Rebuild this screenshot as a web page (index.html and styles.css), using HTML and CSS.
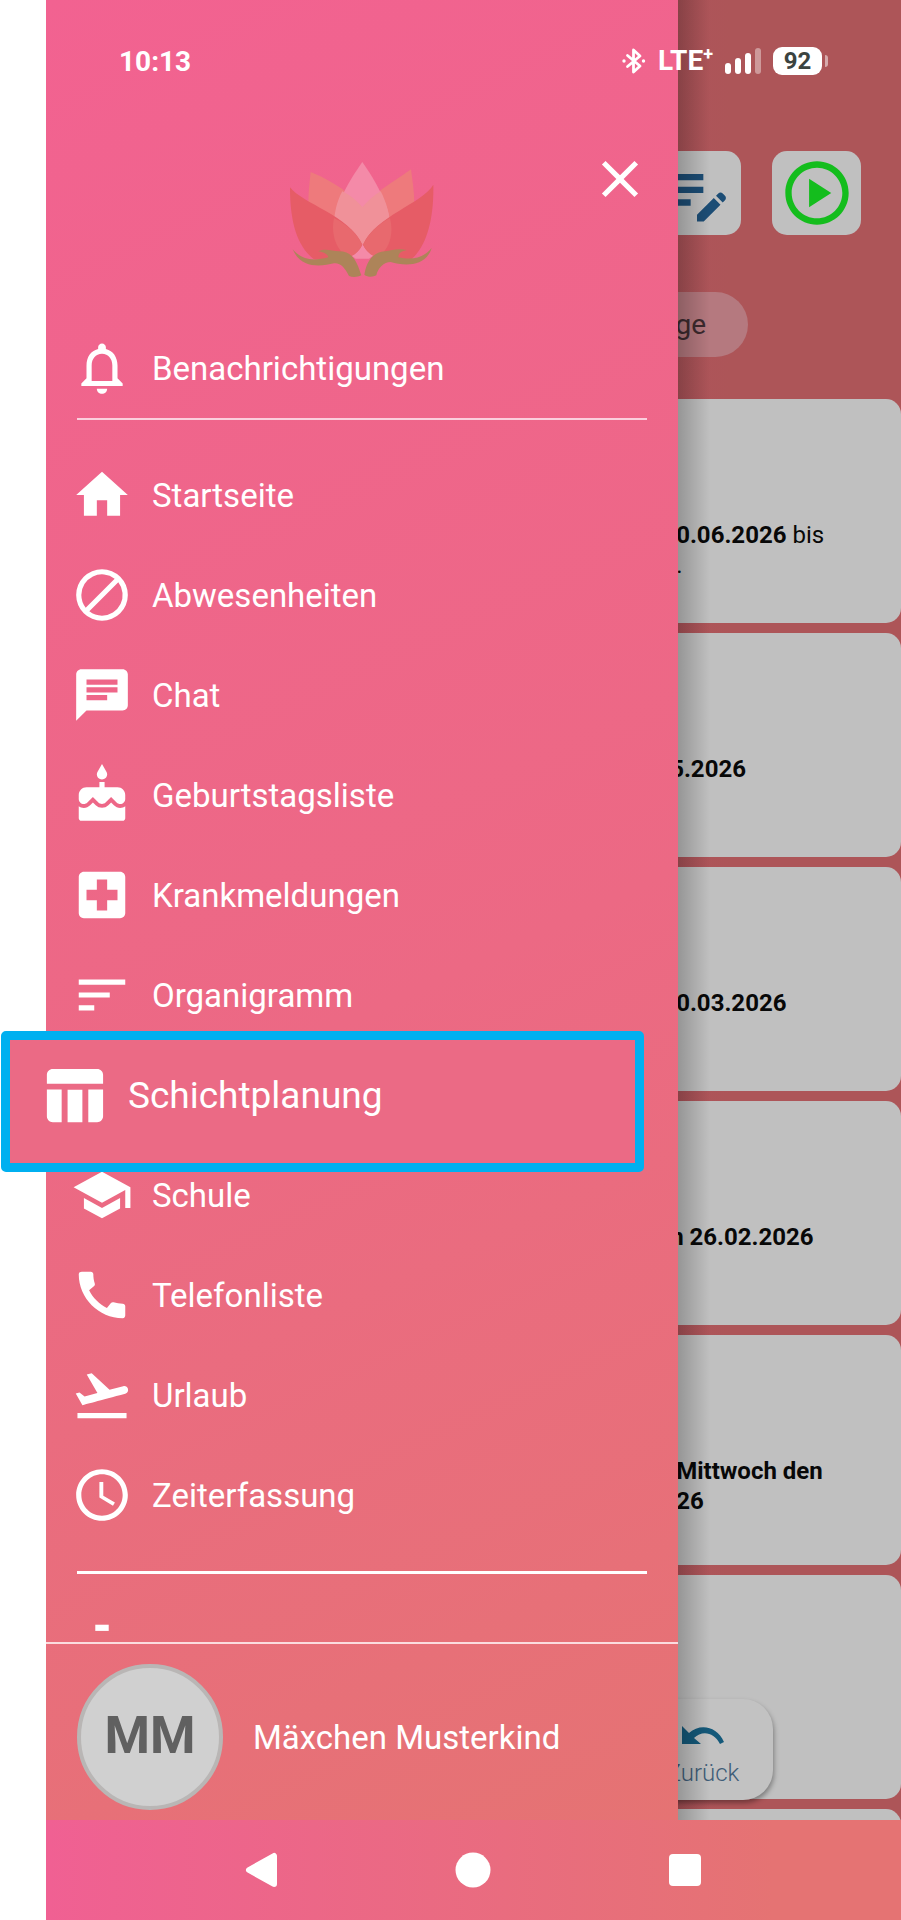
FILE: index.html
```html
<!DOCTYPE html>
<html lang="de">
<head>
    <meta charset="utf-8">
    <meta name="viewport" content="width=device-width, initial-scale=1">
    <title>Menü</title>
    <link rel="stylesheet" href="styles.css">
</head>
<body>
    <div class="phone">
        <div class="screen">

            <!-- Page behind the menu -->
            <main class="page">
                <div class="toolbar">
                    <button class="tool edit" aria-label="Bearbeiten">
                        <svg viewBox="0 0 24 24"><path d="M3 10h11v2H3v-2zm0-2h11V6H3v2zm0 8h7v-2H3v2zm15.01-3.13.71-.71c.39-.39 1.02-.39 1.41 0l.71.71c.39.39.39 1.02 0 1.41l-.71.71-2.12-2.12zm-.71.71-5.3 5.3V21h2.12l5.3-5.3-2.12-2.12z"/></svg>
                    </button>
                    <button class="tool play" aria-label="Starten">
                        <svg viewBox="0 0 24 24"><path d="M9.5 16.5l7-4.5-7-4.5v9zM12 2C6.48 2 2 6.48 2 12s4.48 10 10 10 10-4.48 10-10S17.52 2 12 2zm0 18c-4.41 0-8-3.59-8-8s3.59-8 8-8 8 3.59 8 8-3.59 8-8 8z"/></svg>
                    </button>
                </div>
                <div class="filters">
                    <button class="chip">ge</button>
                </div>
                <div class="cards">
                    <article class="card"><p class="date"><b>0.06.2026</b> bis<br>.</p></article>
                    <article class="card"><p><b>5.2026</b></p></article>
                    <article class="card"><p class="date"><b>0.03.2026</b></p></article>
                    <article class="card"><p><b>n 26.02.2026</b></p></article>
                    <article class="card tall"><p class="date"><b>Mittwoch den<br>26</b></p></article>
                    <article class="card"></article>
                    <article class="card"></article>
                </div>
                <button class="back">
                    <svg viewBox="0 0 44 20"><path d="M1 1v18h19l-7-6c8-8 20-6 26 6l4-2C36 1 19-2 8 8z"/></svg>
                    Zurück
                </button>
            </main>

            <!-- Side menu -->
            <aside class="drawer">
                <header class="drawer-head">
                    <svg class="logo" viewBox="0 0 435 345">
                        <path fill="#ee7a7c" d="M65 30C110 48 150 72 185 100L220 230L140 210L58 125C58 90 62 60 65 30z"/>
                        <path fill="#ee7a7c" d="M366 22C330 48 290 72 255 100L220 230L300 210L376 125C376 90 370 55 366 22z"/>
                        <path fill="#f48aa8" d="M220 0C185 50 135 130 135 190C135 240 180 278 200 290H240C270 270 303 230 303 190C303 130 255 50 220 0z"/>
                        <path fill="#f09199" d="M160 88C185 100 205 118 220 135C235 118 255 100 275 88C292 120 303 160 303 190C303 240 250 262 220 245C190 262 135 240 135 190C135 160 142 120 160 88z"/>
                        <path fill="#e65c66" d="M3 76C40 125 180 160 220 248C205 276 180 302 75 292C20 250 3 170 3 76z"/>
                        <path fill="#e65c66" d="M433 68C400 125 262 160 222 248C237 276 262 302 367 292C416 250 435 165 433 68z"/>
                        <path fill="#e8696e" d="M135 168C175 188 205 215 220 248C210 268 195 282 175 286C140 260 125 215 135 168z"/>
                        <path fill="#e8696e" d="M303 168C265 188 237 215 222 248C232 268 247 282 267 286C302 260 315 215 303 168z"/>
                        <path fill="#ad8459" d="M11 262C35 290 65 300 118 286C115 274 105 272 88 268C110 258 130 268 150 268C195 268 205 305 217 340C205 346 190 346 180 342C168 318 155 302 135 304C95 314 35 320 11 262z"/>
                        <path fill="#ad8459" d="M428 258C405 285 375 296 328 286C328 274 335 268 354 264C325 258 310 264 288 268C245 272 232 305 226 338C236 346 252 346 262 340C266 318 285 300 305 300C345 312 410 316 428 258z"/>
                    </svg>
                    <button class="close" aria-label="Schließen">
                        <svg class="icon" viewBox="0 0 24 24"><path d="M19 6.41L17.59 5 12 10.59 6.41 5 5 6.41 10.59 12 5 17.59 6.41 19 12 13.41 17.59 19 19 17.59 13.41 12z"/></svg>
                    </button>
                </header>

                <nav class="menu">
                    <a class="item notifications" href="#">
                        <svg class="icon" viewBox="0 0 24 24"><path d="M12 22c1.1 0 2-.9 2-2h-4c0 1.1.89 2 2 2zm6-6v-5c0-3.07-1.64-5.64-4.5-6.32V4c0-.83-.67-1.5-1.5-1.5s-1.5.67-1.5 1.5v.68C7.63 5.36 6 7.92 6 11v5l-2 2v1h16v-1l-2-2zm-2 1H8v-6c0-2.48 1.51-4.5 4-4.5s4 2.02 4 4.5v6z"/></svg>
                        Benachrichtigungen
                    </a>
                    <hr>
                    <ul>
                        <li><a class="item" href="#">
                            <svg class="icon" viewBox="0 0 24 24"><path d="M10 20v-6h4v6h5v-8h3L12 3 2 12h3v8z"/></svg>
                            Startseite
                        </a></li>
                        <li><a class="item" href="#">
                            <svg class="icon" viewBox="0 0 24 24"><path d="M12 2a10 10 0 1 0 0 20 10 10 0 0 0 0-20zM4 12a8 8 0 0 1 12.9-6.31L5.69 16.9A7.9 7.9 0 0 1 4 12zm8 8a7.9 7.9 0 0 1-4.9-1.69L18.31 7.1A8 8 0 0 1 12 20z"/></svg>
                            Abwesenheiten
                        </a></li>
                        <li><a class="item" href="#">
                            <svg class="icon" viewBox="0 0 24 24"><path d="M20 2H4c-1.1 0-1.99.9-1.99 2L2 22l4-4h14c1.1 0 2-.9 2-2V4c0-1.1-.9-2-2-2zM6 9h12v2H6V9zm8 5H6v-2h8v2zm4-6H6V6h12v2z"/></svg>
                            Chat
                        </a></li>
                        <li><a class="item" href="#">
                            <svg class="icon" viewBox="0 0 24 24"><path d="M12 6c1.11 0 2-.9 2-2 0-.38-.1-.73-.29-1.03L12 0l-1.71 2.97c-.19.3-.29.65-.29 1.03 0 1.1.9 2 2 2zm4.6 9.99l-1.07-1.07-1.08 1.07c-1.3 1.3-3.58 1.31-4.89 0l-1.07-1.07-1.09 1.07C6.75 16.64 5.88 17 4.96 17c-.73 0-1.4-.23-1.96-.61V21c0 .55.45 1 1 1h16c.55 0 1-.45 1-1v-4.61c-.56.38-1.23.61-1.96.61-.92 0-1.79-.36-2.44-1.01zM18 9h-5V7h-2v2H6c-1.66 0-3 1.34-3 3v1.54c0 1.08.88 1.96 1.96 1.96.52 0 1.02-.2 1.38-.57l2.14-2.13 2.13 2.13c.74.74 2.03.74 2.77 0l2.14-2.13 2.13 2.13c.37.37.86.57 1.38.57 1.08 0 1.96-.88 1.96-1.96V12C21 10.34 19.66 9 18 9z"/></svg>
                            Geburtstagsliste
                        </a></li>
                        <li><a class="item" href="#">
                            <svg class="icon" viewBox="0 0 24 24"><path d="M19 3H5c-1.1 0-1.99.9-1.99 2L3 19c0 1.1.9 2 2 2h14c1.1 0 2-.9 2-2V5c0-1.1-.9-2-2-2zm-1 11h-4v4h-4v-4H6v-4h4V6h4v4h4v4z"/></svg>
                            Krankmeldungen
                        </a></li>
                        <li><a class="item" href="#">
                            <svg class="icon" viewBox="0 0 24 24"><path d="M3 18h6v-2H3v2zM3 6v2h18V6H3zm0 7h12v-2H3v2z"/></svg>
                            Organigramm
                        </a></li>
                        <li class="active"><a class="item" href="#">
                            <svg class="icon" viewBox="0 0 24 24"><path d="M10 10.02h5V21h-5V10.02zM17 21h3c1.1 0 2-.9 2-2v-9h-5v11zm3-18H5c-1.1 0-2 .9-2 2v3h19V5c0-1.1-.9-2-2-2zM3 19c0 1.1.9 2 2 2h3V10H3v9z"/></svg>
                            Schichtplanung
                        </a></li>
                        <li><a class="item" href="#">
                            <svg class="icon" viewBox="0 0 24 24"><path d="M5 13.18v4L12 21l7-3.82v-4L12 17l-7-3.82zM12 3L1 9l11 6 9-4.91V17h2V9L12 3z"/></svg>
                            Schule
                        </a></li>
                        <li><a class="item" href="#">
                            <svg class="icon" viewBox="0 0 24 24"><path d="M20.01 15.38c-1.23 0-2.42-.2-3.53-.56-.35-.12-.74-.03-1.01.24l-1.57 1.97c-2.83-1.35-5.48-3.9-6.89-6.83l1.95-1.66c.27-.28.35-.67.24-1.02-.37-1.11-.56-2.3-.56-3.53 0-.54-.45-.99-.99-.99H4.19C3.65 3 3 3.24 3 3.99 3 13.28 10.73 21 20.01 21c.71 0 .99-.63.99-1.18v-3.45c0-.54-.45-.99-.99-.99z"/></svg>
                            Telefonliste
                        </a></li>
                        <li><a class="item" href="#">
                            <svg class="icon" viewBox="0 0 24 24"><path d="M2.5 19h19v2h-19v-2zm19.57-9.36c-.21-.8-1.04-1.28-1.84-1.06L14.92 10l-6.9-6.43-1.93.51 4.14 7.17-4.97 1.33-1.97-1.54-1.45.39 2.59 4.49s7.12-1.9 16.57-4.43c.81-.23 1.28-1.05 1.07-1.85z"/></svg>
                            Urlaub
                        </a></li>
                        <li><a class="item" href="#">
                            <svg class="icon" viewBox="0 0 24 24"><path d="M11.99 2C6.47 2 2 6.48 2 12s4.47 10 9.99 10C17.52 22 22 17.52 22 12S17.52 2 11.99 2zM12 20c-4.42 0-8-3.58-8-8s3.58-8 8-8 8 3.58 8 8-3.58 8-8 8zm.5-13H11v6l5.25 3.15.75-1.23-4.5-2.67z"/></svg>
                            Zeiterfassung
                        </a></li>
                    </ul>
                    <hr class="thick">
                    <a class="item next" href="#" aria-label="Weitere">
                        <svg class="icon" viewBox="0 0 24 24"><path d="M9.4 2.6h5.2v2.4H9.4z"/></svg>
                    </a>
                </nav>

                <footer class="user">
                    <span class="avatar">MM</span>
                    <span>Mäxchen Musterkind</span>
                </footer>
            </aside>

            <!-- Status bar -->
            <div class="status">
                <span class="time">10:13</span>
                <div class="status-icons">
                    <svg class="bluetooth" viewBox="0 0 24 26"><path fill="none" stroke="#fff" stroke-width="2.8" stroke-linejoin="round" stroke-linecap="round" d="M5.500 7.500L18 18l-6.500 6V2L18 8 5.500 18.500"/><circle cx="2" cy="13" r="1.700"/><circle cx="21.500" cy="13" r="1.700"/></svg>
                    <span class="network">LTE<sup>+</sup></span>
                    <svg class="signal" viewBox="0 0 36 26"><rect x="0" y="15" width="6" height="11" rx="3"/><rect x="10" y="10" width="6" height="16" rx="3"/><rect x="20" y="5" width="6" height="21" rx="3"/><rect x="30" y="0" width="6" height="26" rx="3" opacity=".4"/></svg>
                    <span class="battery">92</span>
                </div>
            </div>
        </div>

        <!-- Android navigation -->
        <div class="navbar">
            <button aria-label="Zurück"><svg viewBox="0 0 36 36"><path stroke="#fff" stroke-width="6" stroke-linejoin="round" d="M30 4v28L5 18z"/></svg></button>
            <button aria-label="Home"><svg viewBox="0 0 36 36"><circle cx="18" cy="18" r="17.500"/></svg></button>
            <button aria-label="Übersicht"><svg viewBox="0 0 36 36"><rect x="2" y="2" width="32" height="32" rx="4"/></svg></button>
        </div>
    </div>
</body>
</html>
```
FILE: styles.css
```css
* {
    box-sizing: border-box;
}
body {
    margin: 0;
    background-color: #fff;
    color: #fff;
    font-family: Roboto, sans-serif;
    font-size: 33px;
}
button {
    padding: 0;
    border: none;
    background: none;
    color: inherit;
    font-family: inherit;
    cursor: pointer;
}
svg {
    display: block;
    flex-shrink: 0;
    fill: currentColor;
}
.phone {
    display: flex;
    flex-direction: column;
    height: 100vh;
    margin-left: 46px;
}
.screen {
    position: relative;
    flex: 1;
    min-height: 0;
}

/* page behind the menu */
.page {
    position: relative;
    height: 100%;
    overflow: hidden;
    background: linear-gradient(90deg, #b44a6e, #ad5558 80%);
}
.toolbar {
    display: flex;
    justify-content: flex-end;
    gap: 31px;
    padding: 151px 40px 0 0;
}
.tool {
    display: flex;
    align-items: center;
    justify-content: center;
    width: 89px;
    height: 84px;
    border-radius: 15px;
    background-color: #c0c0c0;
}
.tool svg {
    width: 76px;
    height: 76px;
}
.edit {
    color: #1c4d75;
}
.play {
    color: #14bd1d;
}
.filters {
    display: flex;
    justify-content: flex-end;
    padding: 57px 153px 42px 0;
}
.chip {
    width: 200px;
    height: 65px;
    padding-right: 42px;
    border-radius: 33px;
    background-color: #b5797f;
    color: #3c2a2e;
    font-size: 28px;
    text-align: right;
}
.cards {
    display: flex;
    flex-direction: column;
    gap: 10px;
}
.card {
    flex-shrink: 0;
    min-height: 224px;
    padding: 121px 0 0 73%;
    border-radius: 15px;
    background-color: #c0c0c0;
    color: #080808;
    font-size: 24px;
    line-height: 30px;
    white-space: nowrap;
}
.card.tall {
    min-height: 230px;
}
.card p {
    margin: 0;
}
.card .date {
    padding-left: 6px;
}
.back {
    position: absolute;
    right: 128px;
    bottom: 20px;
    display: flex;
    flex-direction: column;
    align-items: center;
    gap: 14px;
    width: 140px;
    height: 101px;
    padding-top: 26px;
    border-radius: 30px;
    background-color: #c2c2c2;
    box-shadow: 1px 3px 5px rgba(0, 0, 0, 0.35);
    color: #3e5d78;
    font-size: 24px;
    font-weight: 300;
}
.back svg {
    width: 44px;
    height: 20px;
    color: #14597a;
}

/* side menu */
.drawer {
    position: absolute;
    top: 0;
    bottom: 0;
    left: 0;
    display: flex;
    flex-direction: column;
    width: 73.9%;
    background: linear-gradient(155deg, #f26291, #ec6984 55%, #e57373);
}
.drawer::after {
    content: "";
    position: absolute;
    top: 0;
    bottom: 0;
    left: 100%;
    width: 32px;
    background: linear-gradient(90deg, rgba(0, 0, 0, 0.22), transparent);
}
.drawer-head {
    display: flex;
    justify-content: center;
    height: 337px;
    padding-top: 162px;
}
.logo {
    width: 145px;
    height: 115px;
}
.close {
    position: absolute;
    top: 148px;
    right: 27px;
}
.icon {
    width: 62px;
    height: 62px;
}
.menu {
    flex: 1;
    min-height: 0;
    padding: 0 25px;
    overflow-y: clip;
}
.menu ul {
    margin: 0;
    padding: 0;
    list-style: none;
}
.item {
    display: flex;
    align-items: center;
    gap: 19px;
    height: 100px;
    color: #fff;
    text-decoration: none;
}
.notifications {
    height: 62px;
}
.menu hr {
    height: 2px;
    margin: 19px 6px 25px;
    border: none;
    background-color: #fbcfdd;
}
.menu .thick {
    height: 3px;
    margin-top: 26px;
    background-color: #fff;
}
.active {
    position: relative;
    z-index: 1;
    margin: -14px 9px -27px -70px;
    padding: 5px 0 18px 28px;
    border: 9px solid #00b0f0;
    border-radius: 5px;
    background-color: #eb6a85;
}
.active .item {
    font-size: 37px;
}
.active .icon {
    width: 71px;
    height: 71px;
}
.user {
    display: flex;
    align-items: center;
    gap: 30px;
    height: 178px;
    padding: 10px 31px 0;
    border-top: 2px solid #fbdcdf;
}
.avatar {
    display: flex;
    align-items: center;
    justify-content: center;
    width: 146px;
    height: 146px;
    padding-bottom: 4px;
    border: 4px solid #b9b6b5;
    border-radius: 50%;
    background-color: #d0d0d0;
    color: #606060;
    font-size: 52px;
    font-weight: 700;
}

/* status bar */
.status {
    position: absolute;
    top: 0;
    left: 0;
    right: 0;
    display: flex;
    align-items: center;
    justify-content: space-between;
    height: 122px;
    padding: 0 79px 0 73px;
}
.time {
    font-size: 28px;
    font-weight: 700;
}
.status-icons {
    display: flex;
    align-items: center;
    gap: 12px;
}
.bluetooth {
    width: 24px;
    height: 26px;
}
.network {
    font-size: 28px;
    font-weight: 700;
    line-height: 30px;
}
.network sup {
    font-size: 18px;
    line-height: 0;
}
.signal {
    width: 36px;
    height: 26px;
}
.battery {
    position: relative;
    width: 49px;
    height: 28px;
    border-radius: 9px;
    background-color: #fff;
    color: #3b4340;
    font-size: 24px;
    font-weight: 700;
    line-height: 28px;
    text-align: center;
}
.battery::after {
    content: "";
    position: absolute;
    top: 8px;
    right: -6px;
    width: 3px;
    height: 12px;
    border-radius: 0 3px 3px 0;
    background-color: rgba(255, 255, 255, 0.5);
}

/* android navigation */
.navbar {
    display: grid;
    grid-template-columns: repeat(3, 1fr);
    height: 100px;
    padding: 0 110px;
    background: linear-gradient(90deg, #f06093, #e57373 85%);
}
.navbar button {
    display: flex;
    align-items: center;
    justify-content: center;
}
.navbar svg {
    width: 36px;
    height: 36px;
}
```
